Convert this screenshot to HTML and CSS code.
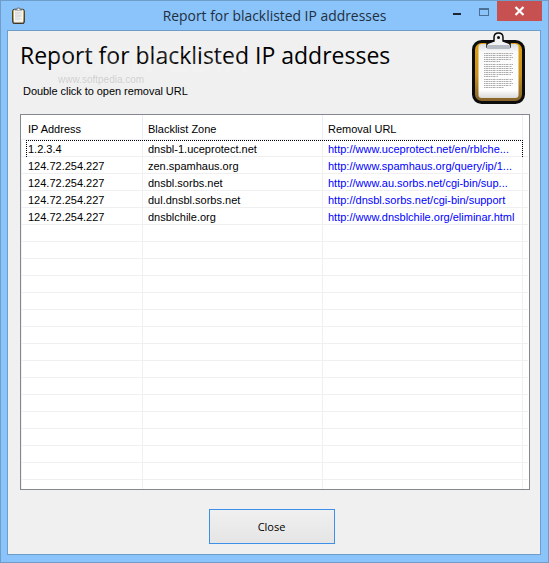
FILE: index.html
```html
<!DOCTYPE html>
<html lang="en">
<head>
  <meta charset="UTF-8" />
  <title>Report for blacklisted IP addresses</title>
  <link rel="stylesheet" href="styles.css">
</head>
<body>
  <svg width="0" height="0" class="defs">
    <defs>
      <linearGradient id="wood" x1="0" y1="0" x2="0" y2="1">
        <stop offset="0" stop-color="#e0a010"/>
        <stop offset="0.55" stop-color="#c8901a"/>
        <stop offset="1" stop-color="#80602c"/>
      </linearGradient>
      <linearGradient id="sheet" x1="0" y1="0" x2="0" y2="1">
        <stop offset="0" stop-color="#d8dbe0"/>
        <stop offset="0.15" stop-color="#fafafa"/>
        <stop offset="0.85" stop-color="#ffffff"/>
        <stop offset="1" stop-color="#d9d9d9"/>
      </linearGradient>
      <symbol id="clipboard" viewBox="0 0 53 72">
        <rect x="1.500" y="9.500" width="50" height="61" rx="8" fill="url(#wood)" stroke="#0c0c0c" stroke-width="3"/>
        <rect x="6.500" y="12" width="40" height="54" rx="3" fill="url(#sheet)"/>
        <path d="M26.500 1c-3 0-4.500 2-4.500 4.500V9l-7 2.500V15h23v-3.500L31 9V5.500C31 3 29.500 1 26.500 1z" fill="#f2f2f2" stroke="#0c0c0c" stroke-width="1.500"/>
        <path d="M15 13h23v4H15z" fill="#b6bcc4"/>
        <circle cx="26.500" cy="5.500" r="1.500" fill="#0c0c0c"/>
        <path d="M12 21.500h29M12 23.500h28M12 25.500h29M12 27.500h27M12 29.500h16M12 32.500h29M12 34.500h28M12 36.500h29M12 38.500h28M12 40.500h29M12 42.500h27M12 44.500h14M12 47.500h29M12 49.500h28M12 51.500h29M12 53.500h27M12 55.500h20" stroke="#777" stroke-width="0.600" stroke-dasharray="1.500 0.500 2.500 0.500 1 0.500" fill="none"/>
      </symbol>
    </defs>
  </svg>

  <div class="window">
    <header class="titlebar">
      <svg class="app-icon" width="13" height="17"><use href="#clipboard"/></svg>
      <span class="title">Report for blacklisted IP addresses</span>
      <div class="controls">
        <span class="btn-min"></span>
        <span class="btn-max"></span>
        <span class="btn-close">
          <svg width="11" height="10" viewBox="0 0 11 10"><path d="M1.500 1l8 8M9.500 1l-8 8" stroke="#fff" stroke-width="2.200" fill="none"/></svg>
        </span>
      </div>
    </header>

    <main class="client">
      <div class="heading">
        <div>
          <h1>Report for blacklisted IP addresses</h1>
          <p class="hint">Double click to open removal URL</p>
        </div>
        <svg class="logo" width="53" height="72"><use href="#clipboard"/></svg>
      </div>

      <div class="grid-box">
        <table class="grid">
          <thead>
            <tr><th>IP Address</th><th>Blacklist Zone</th><th>Removal URL</th></tr>
          </thead>
          <tbody>
            <tr class="focused"><td>1.2.3.4</td><td>dnsbl-1.uceprotect.net</td><td class="url">http://www.uceprotect.net/en/rblche...</td></tr>
            <tr><td>124.72.254.227</td><td>zen.spamhaus.org</td><td class="url">http://www.spamhaus.org/query/ip/1...</td></tr>
            <tr><td>124.72.254.227</td><td>dnsbl.sorbs.net</td><td class="url">http://www.au.sorbs.net/cgi-bin/sup...</td></tr>
            <tr><td>124.72.254.227</td><td>dul.dnsbl.sorbs.net</td><td class="url">http://dnsbl.sorbs.net/cgi-bin/support</td></tr>
            <tr><td>124.72.254.227</td><td>dnsblchile.org</td><td class="url">http://www.dnsblchile.org/eliminar.html</td></tr>
            <tr><td></td><td></td><td></td></tr>
            <tr><td></td><td></td><td></td></tr>
            <tr><td></td><td></td><td></td></tr>
            <tr><td></td><td></td><td></td></tr>
            <tr><td></td><td></td><td></td></tr>
            <tr><td></td><td></td><td></td></tr>
            <tr><td></td><td></td><td></td></tr>
            <tr><td></td><td></td><td></td></tr>
            <tr><td></td><td></td><td></td></tr>
            <tr><td></td><td></td><td></td></tr>
            <tr><td></td><td></td><td></td></tr>
            <tr><td></td><td></td><td></td></tr>
            <tr><td></td><td></td><td></td></tr>
            <tr><td></td><td></td><td></td></tr>
            <tr><td></td><td></td><td></td></tr>
            <tr><td></td><td></td><td></td></tr>
          </tbody>
        </table>
      </div>

      <div class="footer">
        <button class="close">Close</button>
      </div>

      <span class="mark-big">SOFTPEDIA</span>
      <span class="mark-small">www.softpedia.com</span>
    </main>
  </div>
</body>
</html>
```

FILE: styles.css
```css
html, body {
  margin: 0;
  height: 100%;
}
body {
  font-family: 'Liberation Sans', Arial, sans-serif;
  overflow: hidden;
}
.defs {
  position: absolute;
}
.window {
  box-sizing: border-box;
  width: 549px;
  height: 563px;
  background-color: #8ac4fa;
  border: 1px solid #6f9dca;
  display: flex;
  flex-direction: column;
}
.titlebar {
  height: 29px;
  display: flex;
  justify-content: center;
  position: relative;
}
.app-icon {
  position: absolute;
  left: 11px;
  top: 6px;
}
.title {
  font-family: 'Open Sans', sans-serif;
  font-size: 13.900px;
  line-height: 30px;
  color: #1f2f40;
}
.controls {
  position: absolute;
  right: 6px;
  top: 0;
  display: flex;
  align-items: flex-start;
}
.btn-min {
  width: 8px;
  height: 2px;
  margin: 12px 18px 0 0;
  background-color: #1c2733;
}
.btn-max {
  box-sizing: border-box;
  width: 10px;
  height: 8px;
  margin: 7px 8px 0 0;
  border: 1px solid #4d6f94;
  border-top-width: 2px;
}
.btn-close {
  width: 45px;
  height: 20px;
  background-color: #c75050;
  display: flex;
  align-items: center;
  justify-content: center;
}
.client {
  box-sizing: border-box;
  position: relative;
  width: 534px;
  height: 525px;
  margin: 0 0 0 6px;
  padding: 0 12px;
  background-color: #f0f0f0;
  border: 1px solid #6f9dca;
  display: flex;
  flex-direction: column;
}
.heading {
  height: 83px;
  display: flex;
  justify-content: space-between;
  position: relative;
}
.heading h1 {
  margin: 8px 0 0;
  font-family: 'Open Sans', sans-serif;
  font-size: 23px;
  font-weight: 400;
  line-height: 32px;
  color: #000;
}
.hint {
  margin: 13px 0 0 3px;
  font-size: 11px;
  letter-spacing: -0.050px;
  line-height: 14px;
  color: #000;
}
.logo {
  margin: 1px 3px 0 0;
}
.grid-box {
  box-sizing: border-box;
  width: 510px;
  height: 376px;
  background-color: #fff;
  background-image: repeating-linear-gradient(transparent 0 16px, #f0f0f0 16px 17px);
  background-position: 0 25px;
  background-repeat: no-repeat;
  background-size: 507px 340px;
  border: 1px solid #828790;
  overflow: hidden;
}
.grid {
  border-collapse: separate;
  border-spacing: 0;
  table-layout: fixed;
  width: 502px;
  font-size: 11px;
  color: #000;
}
.grid th {
  height: 25px;
  padding: 3px 0 0 5px;
  font-weight: 400;
  text-align: left;
  border-right: 1px solid #e8eef7;
  border-bottom: 1px solid #f0f3f8;
  box-sizing: border-box;
}
.grid th:nth-child(1), .grid td:nth-child(1) {
  width: 122px;
  padding-left: 7px;
}
.grid th:nth-child(2), .grid td:nth-child(2) {
  width: 180px;
}
.grid td {
  box-sizing: border-box;
  height: 17px;
  padding: 2px 0 0 5px;
  line-height: 14px;
  white-space: nowrap;
  overflow: hidden;
  border-right: 1px solid #f0f0f0;
  border-bottom: 1px solid #f0f0f0;
}
.grid td:first-child {
  border-left: 1px solid #f0f0f0;
  padding-left: 6px;
}
.grid td.url {
  color: #0000ff;
}
.focused {
  position: relative;
}
.focused td:first-child::after {
  content: "";
  position: absolute;
  left: 5px;
  top: 0;
  width: 495px;
  height: 16px;
  border: 1px dotted #000;
  border-bottom: none;
}
.footer {
  flex: 1;
  display: flex;
  justify-content: center;
  align-items: flex-start;
  padding: 19px 5px 0 0;
}
.close {
  box-sizing: border-box;
  width: 126px;
  height: 35px;
  background: linear-gradient(#f0f0f0, #e5e5e5);
  border: 1px solid #3c90ea;
  font-family: 'Open Sans', sans-serif;
  font-size: 11px;
  color: #000;
}
.mark-big {
  position: absolute;
  left: 46px;
  top: 10px;
  font-size: 34px;
  font-weight: 700;
  color: rgba(255, 255, 255, 0.18);
}
.mark-small {
  position: absolute;
  left: 50px;
  top: 43px;
  font-size: 10px;
  color: rgba(130, 130, 130, 0.3);
}
```
